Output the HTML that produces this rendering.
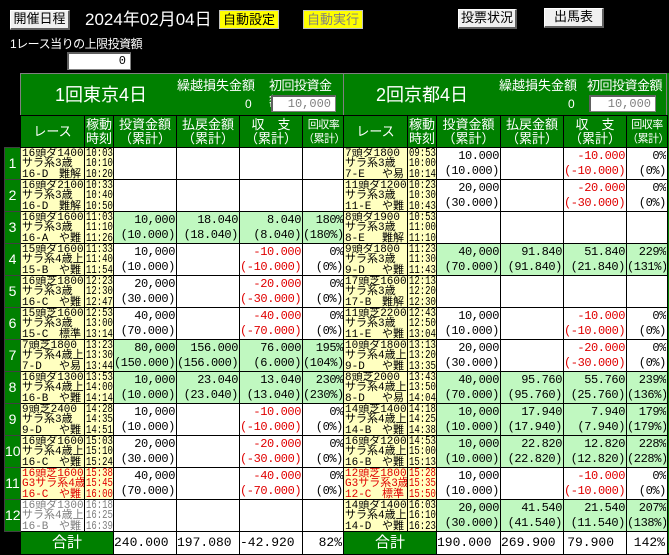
<!DOCTYPE html>
<html><head><meta charset="utf-8"><style>
*{margin:0;padding:0;box-sizing:border-box}
body{width:669px;height:553px;background:#000;position:relative;overflow:hidden;font-family:"Liberation Sans","Noto Sans CJK JP",sans-serif;color:#000}
.a{position:absolute}
.btn{position:absolute;background:#f0f0f0;border:1px solid #fff;border-right:2px solid #606060;border-bottom:2px solid #606060;font-size:13px;text-align:center;line-height:16px}
.yb{position:absolute;background:#ffff00;border:1px solid #c0c0c0;font-size:13px;text-align:center;line-height:17px}
.inp{position:absolute;background:#fff;border:1px solid #808080;border-top:2px solid #606060;border-left:2px solid #606060;font-size:12px;text-align:right;padding-right:4px;color:#808080;font-family:"Liberation Mono","Noto Sans CJK JP",monospace}
.gb{position:absolute;background:#008000;border:1px solid #808080;color:#fff}
.gb .a{line-height:16px}
table{position:absolute;border-collapse:collapse;table-layout:fixed}
td{border:1px solid #000;padding:0;overflow:hidden;white-space:nowrap;vertical-align:top}
td>div{height:31px;overflow:hidden}
th{border:1px solid #000;background:#008000;color:#fff;font-weight:normal;font-size:13px;line-height:14px;height:32px;white-space:nowrap;overflow:hidden}
th.s{font-size:11px;letter-spacing:-0.5px}
td.n{background:#008000;color:#fff;border:1px solid #404040;font-size:14px;text-align:center}
td.n>div{line-height:31px}
td.r{background:#ffffc0;font-family:"Liberation Mono","Noto Sans CJK JP",monospace;font-size:11px;line-height:10.3px;padding-left:1px}
td.r>div{padding-top:1px}
td.r p{display:flex;justify-content:space-between;padding-right:3px}
td.t{background:#ffffc0;font-family:"Liberation Mono",monospace;font-size:11.5px;line-height:10.3px;padding-left:1px}
td.t>div{transform:scaleX(0.78);transform-origin:left top;width:40px;padding-top:1px}
td.v{background:#fff;font-family:"Liberation Mono",monospace;font-size:12px;line-height:15px;text-align:right;padding-right:1px;letter-spacing:-0.4px}
td.v>div{padding-top:1px}
tr.g td.v{background:#c0f8c0}
.red{color:#e00000}
.rd td.r,.rd td.t{color:#e00000}
.gy td.r,.gy td.t{color:#808080}
tr.tot td{height:23px;background:#fff;font-size:13px;text-align:right;padding-right:12px;line-height:22px;font-family:"Liberation Mono",monospace}
tr.tot td.k{background:#008000;color:#fff;text-align:center;padding:0;font-size:15px;font-family:"Liberation Sans","Noto Sans CJK JP",sans-serif}
tr.tot td.bk{background:#000;border:none}
</style></head><body>
<div class="btn" style="left:10px;top:10px;width:60px;height:20px">開催日程</div>
<div class="a" style="left:85px;top:9px;color:#fff;font-size:17px;line-height:22px">2024年02月04日</div>
<div class="yb" style="left:219px;top:10px;width:60px;height:19px">自動設定</div>
<div class="yb" style="left:303px;top:10px;width:60px;height:19px;color:#808080">自動実行</div>
<div class="btn" style="left:458px;top:9px;width:59px;height:20px">投票状況</div>
<div class="btn" style="left:544px;top:8px;width:60px;height:20px">出馬表</div>
<div class="a" style="left:10px;top:36px;color:#fff;font-size:12px;line-height:16px;letter-spacing:-0.5px">1レース当りの上限投資額</div>
<div class="inp" style="left:67px;top:52px;width:64px;height:18px;line-height:15px;color:#000">0</div>

<div class="gb" style="left:20px;top:73px;width:324px;height:43px">
<div class="a" style="left:34px;top:10px;font-size:18px;line-height:22px">1回東京4日</div>
<div class="a" style="left:156px;top:4px;font-size:13px">繰越損失金額</div>
<div class="a" style="left:224px;top:22px;font-size:12px">0</div>
<div class="a" style="left:248px;top:4px;font-size:13px;letter-spacing:-0.5px">初回投資金額</div>
<div class="inp" style="left:250px;top:21px;width:65px;height:17px;line-height:14px">10,000</div>
</div>
<div class="gb" style="left:343px;top:73px;width:324px;height:43px">
<div class="a" style="left:32px;top:10px;font-size:18px;line-height:22px">2回京都4日</div>
<div class="a" style="left:155px;top:4px;font-size:13px">繰越損失金額</div>
<div class="a" style="left:224px;top:22px;font-size:12px">0</div>
<div class="a" style="left:243px;top:4px;font-size:13px;letter-spacing:-0.5px">初回投資金額</div>
<div class="inp" style="left:245px;top:21px;width:67px;height:17px;line-height:14px">10,000</div>
</div>
<div class="a" style="left:667px;top:73px;width:2px;height:480px;background:#008000"></div>

<table style="left:4px;top:115px;width:340px">
<colgroup><col style="width:16px"><col style="width:64px"><col style="width:29px"><col style="width:63px"><col style="width:63px"><col style="width:63px"><col style="width:42px"></colgroup>
<tr><td style="border:none;background:#000"></td><th>レース</th><th>稼動<br>時刻</th><th>投資金額<br>（累計）</th><th>払戻金額<br>（累計）</th><th>収　支<br>（累計）</th><th class="s">回収率<br>（累計）</th></tr>
<tr><td class="n"><div>1</div></td><td class="r"><div>16頭ダ1400<br>サラ系3歳<p><span>16-D</span><span>難解</span></p></div></td><td class="t"><div>10:03<br>10:10<br>10:20</div></td><td class="v"><div></div></td><td class="v"><div></div></td><td class="v"><div></div></td><td class="v"><div></div></td></tr>
<tr><td class="n"><div>2</div></td><td class="r"><div>16頭ダ2100<br>サラ系3歳<p><span>16-D</span><span>難解</span></p></div></td><td class="t"><div>10:33<br>10:40<br>10:50</div></td><td class="v"><div></div></td><td class="v"><div></div></td><td class="v"><div></div></td><td class="v"><div></div></td></tr>
<tr class="g"><td class="n"><div>3</div></td><td class="r"><div>16頭ダ1600<br>サラ系3歳<p><span>16-A</span><span>や難</span></p></div></td><td class="t"><div>11:03<br>11:10<br>11:26</div></td><td class="v"><div>10,000<br>(10.000)</div></td><td class="v"><div>18.040<br>(18.040)</div></td><td class="v"><div>8.040<br>(8.040)</div></td><td class="v"><div>180%<br>(180%)</div></td></tr>
<tr><td class="n"><div>4</div></td><td class="r"><div>15頭ダ1600<br>サラ系4歳上<p><span>15-B</span><span>や難</span></p></div></td><td class="t"><div>11:33<br>11:40<br>11:54</div></td><td class="v"><div>10,000<br>(10.000)</div></td><td class="v"><div></div></td><td class="v red"><div>-10.000<br>(-10.000)</div></td><td class="v"><div>0%<br>(0%)</div></td></tr>
<tr><td class="n"><div>5</div></td><td class="r"><div>16頭芝1800<br>サラ系3歳<p><span>16-C</span><span>や難</span></p></div></td><td class="t"><div>12:23<br>12:30<br>12:47</div></td><td class="v"><div>20,000<br>(30.000)</div></td><td class="v"><div></div></td><td class="v red"><div>-20.000<br>(-30.000)</div></td><td class="v"><div>0%<br>(0%)</div></td></tr>
<tr><td class="n"><div>6</div></td><td class="r"><div>15頭芝1600<br>サラ系3歳<p><span>15-C</span><span>標準</span></p></div></td><td class="t"><div>12:53<br>13:00<br>13:14</div></td><td class="v"><div>40,000<br>(70.000)</div></td><td class="v"><div></div></td><td class="v red"><div>-40.000<br>(-70.000)</div></td><td class="v"><div>0%<br>(0%)</div></td></tr>
<tr class="g"><td class="n"><div>7</div></td><td class="r"><div>7頭芝1800<br>サラ系4歳上<p><span>7-D</span><span>や易</span></p></div></td><td class="t"><div>13:23<br>13:30<br>13:44</div></td><td class="v"><div>80,000<br>(150.000)</div></td><td class="v"><div>156.000<br>(156.000)</div></td><td class="v"><div>76.000<br>(6.000)</div></td><td class="v"><div>195%<br>(104%)</div></td></tr>
<tr class="g"><td class="n"><div>8</div></td><td class="r"><div>16頭ダ1300<br>サラ系4歳上<p><span>16-B</span><span>や難</span></p></div></td><td class="t"><div>13:53<br>14:00<br>14:14</div></td><td class="v"><div>10,000<br>(10.000)</div></td><td class="v"><div>23.040<br>(23.040)</div></td><td class="v"><div>13.040<br>(13.040)</div></td><td class="v"><div>230%<br>(230%)</div></td></tr>
<tr><td class="n"><div>9</div></td><td class="r"><div>9頭芝2400<br>サラ系3歳<p><span>9-D</span><span>や難</span></p></div></td><td class="t"><div>14:28<br>14:35<br>14:51</div></td><td class="v"><div>10,000<br>(10.000)</div></td><td class="v"><div></div></td><td class="v red"><div>-10.000<br>(-10.000)</div></td><td class="v"><div>0%<br>(0%)</div></td></tr>
<tr><td class="n"><div>10</div></td><td class="r"><div>16頭ダ1600<br>サラ系4歳上<p><span>16-C</span><span>や難</span></p></div></td><td class="t"><div>15:03<br>15:10<br>15:24</div></td><td class="v"><div>20,000<br>(30.000)</div></td><td class="v"><div></div></td><td class="v red"><div>-20.000<br>(-30.000)</div></td><td class="v"><div>0%<br>(0%)</div></td></tr>
<tr class="rd"><td class="n"><div>11</div></td><td class="r"><div>16頭芝1600<br>G3サラ系4歳<p><span>16-C</span><span>や難</span></p></div></td><td class="t"><div>15:38<br>15:45<br>16:00</div></td><td class="v"><div>40,000<br>(70.000)</div></td><td class="v"><div></div></td><td class="v red"><div>-40.000<br>(-70.000)</div></td><td class="v"><div>0%<br>(0%)</div></td></tr>
<tr class="gy"><td class="n"><div>12</div></td><td class="r" style="background:#fff"><div>16頭ダ1300<br>サラ系4歳上<p><span>16-B</span><span>や難</span></p></div></td><td class="t" style="background:#fff"><div>16:18<br>16:25<br>16:39</div></td><td class="v"><div></div></td><td class="v"><div></div></td><td class="v"><div></div></td><td class="v"><div></div></td></tr>
<tr class="tot"><td class="bk"></td><td class="k" colspan="2">合計</td><td>240.000</td><td>197.080</td><td>-42.920</td><td style="padding-right:2px">82%</td></tr>
</table>

<table style="left:343px;top:115px;width:324px">
<colgroup><col style="width:64px"><col style="width:29px"><col style="width:64px"><col style="width:63px"><col style="width:63px"><col style="width:41px"></colgroup>
<tr><th>レース</th><th>稼動<br>時刻</th><th>投資金額<br>（累計）</th><th>払戻金額<br>（累計）</th><th>収　支<br>（累計）</th><th class="s">回収率<br>（累計）</th></tr>
<tr><td class="r"><div>7頭ダ1800<br>サラ系3歳<p><span>7-E</span><span>や易</span></p></div></td><td class="t"><div>09:53<br>10:00<br>10:14</div></td><td class="v"><div>10.000<br>(10.000)</div></td><td class="v"><div></div></td><td class="v red"><div>-10.000<br>(-10.000)</div></td><td class="v"><div>0%<br>(0%)</div></td></tr>
<tr><td class="r"><div>11頭ダ1200<br>サラ系3歳<p><span>11-E</span><span>や難</span></p></div></td><td class="t"><div>10:23<br>10:30<br>10:43</div></td><td class="v"><div>20,000<br>(30.000)</div></td><td class="v"><div></div></td><td class="v red"><div>-20.000<br>(-30.000)</div></td><td class="v"><div>0%<br>(0%)</div></td></tr>
<tr><td class="r"><div>8頭ダ1900<br>サラ系3歳<p><span>8-E</span><span>難解</span></p></div></td><td class="t"><div>10:53<br>11:00<br>11:10</div></td><td class="v"><div></div></td><td class="v"><div></div></td><td class="v"><div></div></td><td class="v"><div></div></td></tr>
<tr class="g"><td class="r"><div>9頭ダ1800<br>サラ系3歳<p><span>9-D</span><span>や難</span></p></div></td><td class="t"><div>11:23<br>11:30<br>11:43</div></td><td class="v"><div>40,000<br>(70.000)</div></td><td class="v"><div>91.840<br>(91.840)</div></td><td class="v"><div>51.840<br>(21.840)</div></td><td class="v"><div>229%<br>(131%)</div></td></tr>
<tr><td class="r"><div>17頭芝1600<br>サラ系3歳<p><span>17-B</span><span>難解</span></p></div></td><td class="t"><div>12:13<br>12:20<br>12:30</div></td><td class="v"><div></div></td><td class="v"><div></div></td><td class="v"><div></div></td><td class="v"><div></div></td></tr>
<tr><td class="r"><div>11頭芝2200<br>サラ系3歳<p><span>11-E</span><span>や難</span></p></div></td><td class="t"><div>12:43<br>12:50<br>13:04</div></td><td class="v"><div>10,000<br>(10.000)</div></td><td class="v"><div></div></td><td class="v red"><div>-10.000<br>(-10.000)</div></td><td class="v"><div>0%<br>(0%)</div></td></tr>
<tr><td class="r"><div>10頭ダ1800<br>サラ系4歳上<p><span>9-D</span><span>や難</span></p></div></td><td class="t"><div>13:13<br>13:20<br>13:35</div></td><td class="v"><div>20,000<br>(30.000)</div></td><td class="v"><div></div></td><td class="v red"><div>-20.000<br>(-30.000)</div></td><td class="v"><div>0%<br>(0%)</div></td></tr>
<tr class="g"><td class="r"><div>8頭芝2000<br>サラ系4歳上<p><span>8-D</span><span>や易</span></p></div></td><td class="t"><div>13:43<br>13:50<br>14:04</div></td><td class="v"><div>40,000<br>(70.000)</div></td><td class="v"><div>95.760<br>(95.760)</div></td><td class="v"><div>55.760<br>(25.760)</div></td><td class="v"><div>239%<br>(136%)</div></td></tr>
<tr class="g"><td class="r"><div>14頭芝1400<br>サラ系4歳上<p><span>14-B</span><span>や難</span></p></div></td><td class="t"><div>14:18<br>14:25<br>14:38</div></td><td class="v"><div>10,000<br>(10.000)</div></td><td class="v"><div>17.940<br>(17.940)</div></td><td class="v"><div>7.940<br>(7.940)</div></td><td class="v"><div>179%<br>(179%)</div></td></tr>
<tr class="g"><td class="r"><div>16頭ダ1200<br>サラ系4歳上<p><span>16-B</span><span>や難</span></p></div></td><td class="t"><div>14:53<br>15:00<br>15:13</div></td><td class="v"><div>10,000<br>(10.000)</div></td><td class="v"><div>22.820<br>(22.820)</div></td><td class="v"><div>12.820<br>(12.820)</div></td><td class="v"><div>228%<br>(228%)</div></td></tr>
<tr class="rd"><td class="r"><div>12頭芝1800<br>G3サラ系3歳<p><span>12-C</span><span>標準</span></p></div></td><td class="t"><div>15:28<br>15:35<br>15:50</div></td><td class="v"><div>10,000<br>(10.000)</div></td><td class="v"><div></div></td><td class="v red"><div>-10.000<br>(-10.000)</div></td><td class="v"><div>0%<br>(0%)</div></td></tr>
<tr class="g"><td class="r"><div>14頭ダ1400<br>サラ系4歳上<p><span>14-D</span><span>や難</span></p></div></td><td class="t"><div>16:03<br>16:10<br>16:23</div></td><td class="v"><div>20,000<br>(30.000)</div></td><td class="v"><div>41.540<br>(41.540)</div></td><td class="v"><div>21.540<br>(11.540)</div></td><td class="v"><div>207%<br>(138%)</div></td></tr>
<tr class="tot"><td class="k" colspan="2">合計</td><td>190.000</td><td>269.900</td><td>79.900</td><td style="padding-right:2px">142%</td></tr>
</table>
</body></html>
